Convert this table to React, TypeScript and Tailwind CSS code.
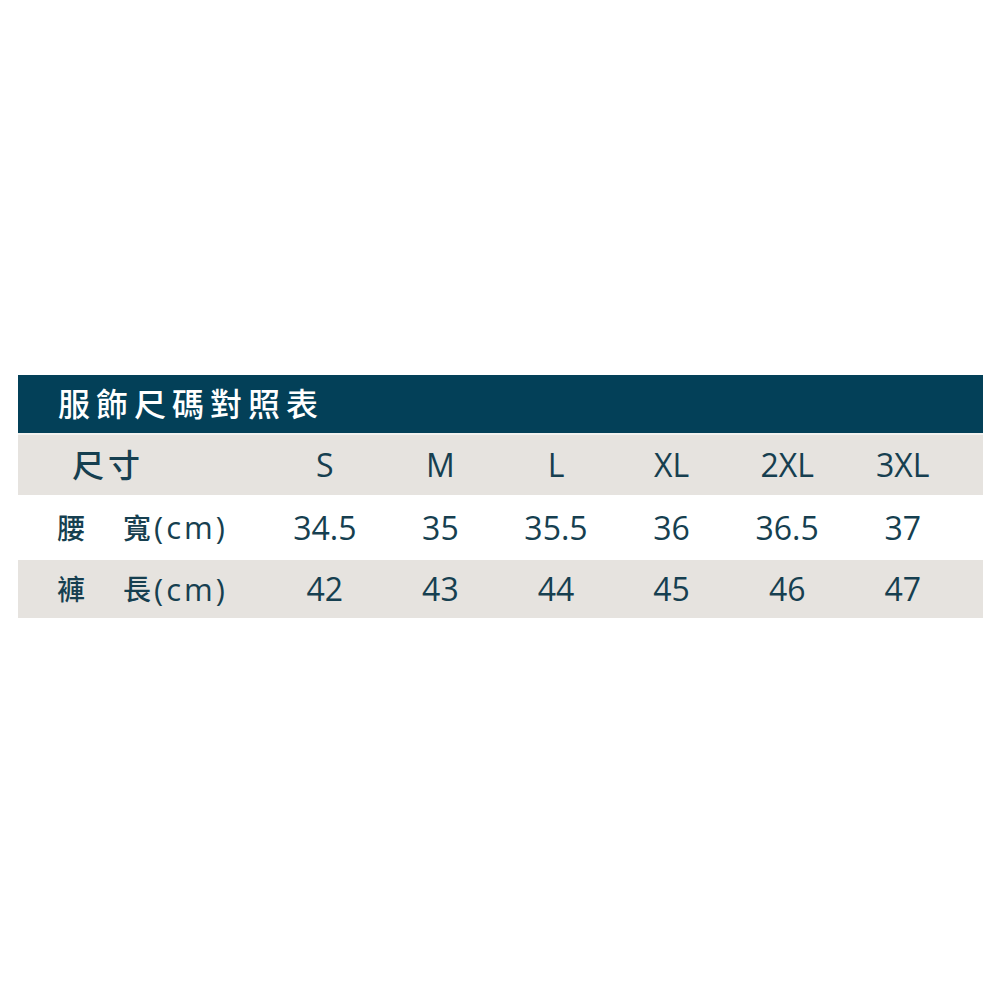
import React from "react";

const sizes = ["S", "M", "L", "XL", "2XL", "3XL"];

const rows = [
  { a: "腰", b: "寬", values: ["34.5", "35", "35.5", "36", "36.5", "37"], bg: "bg-white", h: "h-[65px]" },
  { a: "褲", b: "長", values: ["42", "43", "44", "45", "46", "47"], bg: "bg-[#e6e3df]", h: "h-[58px]" },
];

const font = { fontFamily: '"Open Sans", "Noto Sans CJK TC", sans-serif' };

export default function App() {
  return (
    <div className="w-[1000px] h-[1000px] bg-white pt-[375px] pl-[18px]" style={font}>
      <div className="w-[965px]">
        {/* Title bar */}
        <div className="h-[58px] bg-[#034058] flex items-center pl-[40px]">
          <span className="text-white text-[32px] font-medium tracking-[6px] leading-none">
            服飾尺碼對照表
          </span>
        </div>
        <div className="h-[2px] bg-[#f3f2ef]" />

        {/* Size header */}
        <div className="h-[60px] bg-[#e6e3df] grid grid-cols-[249px_repeat(6,115.6px)_1fr] items-center text-[#163f50] font-medium">
          <div className="pl-[54px] text-[32px] tracking-[4px] leading-none">尺寸</div>
          {sizes.map((s) => (
            <div key={s} className="text-center text-[32px] leading-none">
              {s}
            </div>
          ))}
          <div />
        </div>

        {rows.map((r) => (
          <div
            key={r.a}
            className={`${r.bg} ${r.h} grid grid-cols-[249px_repeat(6,115.6px)_1fr] items-center text-[#163f50] font-medium`}
          >
            <div className="flex items-center pl-[39px] text-[28px] leading-none">
              <span className="w-[66px]">{r.a}</span>
              <span>{r.b}</span>
              <span className="ml-[3px] text-[31px] tracking-[3px]">(cm)</span>
            </div>
            {r.values.map((v, i) => (
              <div key={i} className="text-center text-[32px] leading-none">
                {v}
              </div>
            ))}
            <div />
          </div>
        ))}
      </div>
    </div>
  );
}
